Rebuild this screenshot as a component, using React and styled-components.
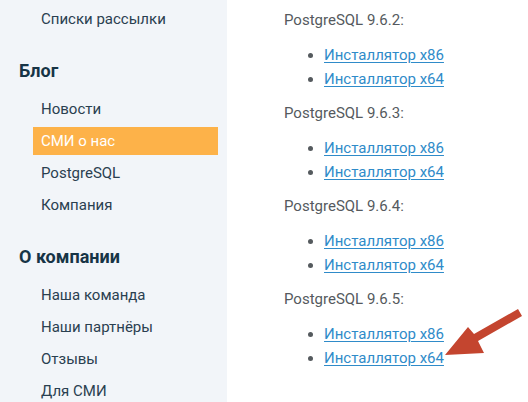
import React from "react";
import styled, { createGlobalStyle } from "styled-components";

const GlobalStyle = createGlobalStyle`
  html, body {
    margin: 0;
    padding: 0;
    background: #ffffff;
  }
  body {
    font-family: Roboto, "Noto Sans", sans-serif;
  }
`;

const Page = styled.div`
  position: relative;
  display: flex;
  width: 528px;
  height: 402px;
  overflow: hidden;
`;

const Sidebar = styled.nav`
  width: 227px;
  flex-shrink: 0;
  background: #f2f5f9;
  padding-top: 5px;
  box-sizing: border-box;
`;

const MenuItem = styled.div`
  margin: 0 9px 4px 33px;
  padding-left: 8px;
  height: 28px;
  line-height: 28px;
  font-size: 15px;
  color: ${(p) => (p.$active ? "#ffffff" : "#2a4050")};
  background: ${(p) => (p.$active ? "#fdb249" : "transparent")};
`;

const MenuHeading = styled.div`
  margin: 26px 0 12px 19px;
  line-height: 24px;
  font-size: 18px;
  font-weight: 700;
  color: #173446;
`;

const Main = styled.main`
  flex: 1;
  padding: 10px 0 0 57px;
`;

const Version = styled.div`
  font-size: 15px;
  line-height: 20px;
  color: #555a5e;
`;

const Links = styled.ul`
  margin: 13px 0 12px;
  padding-left: 40px;
  list-style: disc;
  color: #555a5e;
  font-size: 15px;
  line-height: 24px;
`;

const Link = styled.a`
  color: #2f8bc9;
  text-decoration: underline;
  text-underline-offset: 2px;
`;

const Arrow = styled.svg`
  position: absolute;
  left: 0;
  top: 0;
  pointer-events: none;
`;

const sidebar = [
  { label: "Списки рассылки" },
  { heading: "Блог" },
  { label: "Новости" },
  { label: "СМИ о нас", active: true },
  { label: "PostgreSQL" },
  { label: "Компания" },
  { heading: "О компании" },
  { label: "Наша команда" },
  { label: "Наши партнёры" },
  { label: "Отзывы" },
  { label: "Для СМИ" },
];

const versions = ["9.6.2", "9.6.3", "9.6.4", "9.6.5"];

export default function App() {
  return (
    <>
      <GlobalStyle />
      <Page>
        <Sidebar>
          {sidebar.map((item, i) =>
            item.heading ? (
              <MenuHeading key={i}>{item.heading}</MenuHeading>
            ) : (
              <MenuItem key={i} $active={item.active}>
                {item.label}
              </MenuItem>
            )
          )}
        </Sidebar>
        <Main>
          {versions.map((v) => (
            <div key={v}>
              <Version>PostgreSQL {v}:</Version>
              <Links>
                <li>
                  <Link href="#">Инсталлятор x86</Link>
                </li>
                <li>
                  <Link href="#">Инсталлятор x64</Link>
                </li>
              </Links>
            </div>
          ))}
        </Main>
        <Arrow width="528" height="402" viewBox="0 0 528 402">
          <polygon
            points="445,355 468,327 474,334 518,309 522,316 478,341 484,353"
            fill="#c4452f"
          />
        </Arrow>
      </Page>
    </>
  );
}
